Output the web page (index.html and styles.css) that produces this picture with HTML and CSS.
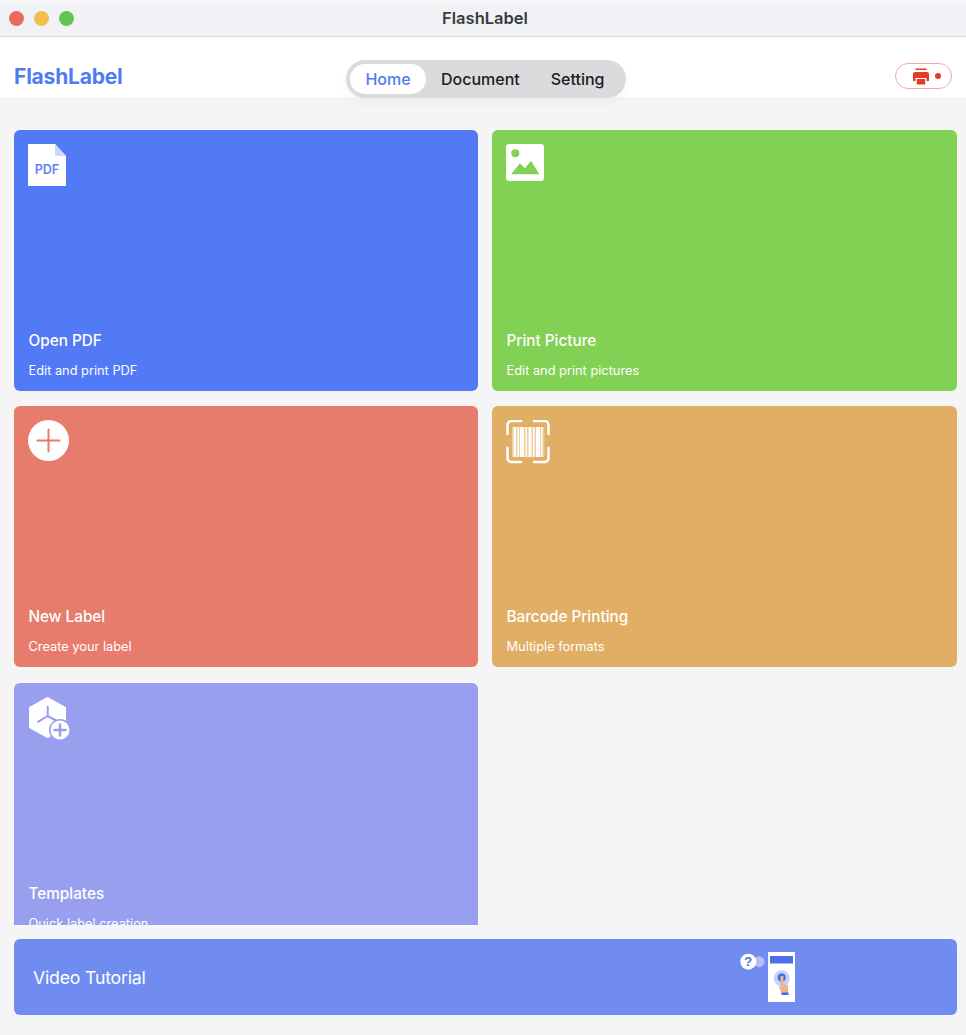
FILE: index.html
```html
<!DOCTYPE html>
<html lang="en">
<head>
    <meta charset="UTF-8">
    <meta name="viewport" content="width=device-width, initial-scale=1.0">
    <title>FlashLabel</title>
    <link rel="stylesheet" href="styles.css">
</head>
<body>
    <!-- Window title bar -->
    <div class="titlebar">
        <div class="traffic">
            <span class="light light-red"></span>
            <span class="light light-yellow"></span>
            <span class="light light-green"></span>
        </div>
        <div class="window-title">FlashLabel</div>
    </div>

    <!-- App header -->
    <div class="header">
        <div class="logo">FlashLabel</div>
        <div class="tabs">
            <div class="tab tab-active">Home</div>
            <div class="tab tab-doc">Document</div>
            <div class="tab tab-set">Setting</div>
        </div>
        <div class="printer-btn">
            <svg width="16" height="17" viewBox="0 0 16 17">
                <rect x="2.500" y="0.500" width="11" height="1.500" fill="#e5392c"/>
                <path d="M0 6a2 2 0 0 1 2-2h12a2 2 0 0 1 2 2v7h-2.500v-3h-11v3H0z" fill="#e5392c"/>
                <rect x="3.800" y="11" width="8.400" height="5.500" fill="#e5392c"/>
            </svg>
            <span class="printer-dot"></span>
        </div>
    </div>

    <div class="main">
        <div class="card-scroll">
            <div class="card-grid">
                <div class="card card-blue">
                    <svg class="card-icon" width="38" height="42" viewBox="0 0 38 42">
                        <path d="M0 0h27l11 12v30H0z" fill="#fff"/>
                        <path d="M27 0l11 12H27z" fill="#c9d8fb"/>
                        <text x="19" y="30" text-anchor="middle" class="pdf-text">PDF</text>
                    </svg>
                    <div class="card-title">Open PDF</div>
                    <div class="card-sub">Edit and print PDF</div>
                </div>
                <div class="card card-green">
                    <svg class="card-icon" width="38" height="37" viewBox="0 0 38 37">
                        <rect width="38" height="37" rx="3" fill="#fff"/>
                        <circle cx="9.300" cy="9.300" r="4" fill="#82d054"/>
                        <path d="M5 30.300l9-11 5 5 6-7.600 8.300 13.600z" fill="#82d054"/>
                    </svg>
                    <div class="card-title">Print Picture</div>
                    <div class="card-sub">Edit and print pictures</div>
                </div>
                <div class="card card-red">
                    <svg class="card-icon" width="41" height="41" viewBox="0 0 41 41">
                        <circle cx="20.500" cy="20.500" r="20.500" fill="#fff"/>
                        <path d="M20.500 9.500v22M9.500 20.500h22" stroke="#e77b6c" stroke-width="2" stroke-linecap="round"/>
                    </svg>
                    <div class="card-title">New Label</div>
                    <div class="card-sub">Create your label</div>
                </div>
                <div class="card card-orange">
                    <svg class="card-icon" width="44" height="44" viewBox="0 0 44 44">
                        <g fill="none" stroke="#fff" stroke-width="2.500" stroke-linecap="round">
                            <path d="M1.500 14V5a4 4 0 0 1 4-4h9.500"/>
                            <path d="M28 1h10.500a4 4 0 0 1 4 4v9"/>
                            <path d="M1.500 28v10a4 4 0 0 0 4 4h9.500"/>
                            <path d="M28 42h10.500a4 4 0 0 0 4-4V28"/>
                        </g>
                        <rect x="6" y="7" width="32.500" height="30" fill="#eecb99"/>
                        <g fill="#fff">
                            <rect x="7.500" y="7" width="2.500" height="30"/>
                            <rect x="11.500" y="7" width="1.500" height="30"/>
                            <rect x="14" y="7" width="4" height="30"/>
                            <rect x="19.500" y="7" width="1.500" height="30"/>
                            <rect x="22.500" y="7" width="3" height="30"/>
                            <rect x="27" y="7" width="1.500" height="30"/>
                            <rect x="30" y="7" width="4" height="30"/>
                            <rect x="35" y="7" width="1.500" height="30"/>
                        </g>
                    </svg>
                    <div class="card-title">Barcode Printing</div>
                    <div class="card-sub">Multiple formats</div>
                </div>
                <div class="card card-purple">
                    <svg class="card-icon" width="43" height="44" viewBox="0 0 43 44">
                        <path d="M19.500 1.500l17 9.500v19l-17 9.500-17-9.500V11z" fill="#fff" stroke="#fff" stroke-width="3" stroke-linejoin="round"/>
                        <path d="M19.700 9.700V19M19.700 19l-9.400 5.700M19.700 19l9.300 5" stroke="#989fef" stroke-width="2" fill="none" stroke-linecap="round"/>
                        <circle cx="32" cy="33" r="11" fill="#989fef"/>
                        <circle cx="32" cy="33" r="9.500" fill="#fff"/>
                        <path d="M32 27.500v11M26.500 33h11" stroke="#989fef" stroke-width="2.500" stroke-linecap="round"/>
                    </svg>
                    <div class="card-title">Templates</div>
                    <div class="card-sub">Quick label creation</div>
                </div>
            </div>
        </div>

        <div class="video-bar">
            <div class="video-title">Video Tutorial</div>
            <svg class="video-art" width="58" height="52" viewBox="0 0 58 52">
                <circle cx="19" cy="10.700" r="5.500" fill="#b4bdf5"/>
                <circle cx="8.300" cy="10.700" r="8" fill="#fff"/>
                <text x="8.300" y="15.200" text-anchor="middle" class="help-text">?</text>
                <rect x="28" y="1" width="27" height="50" fill="#fff"/>
                <rect x="30" y="5" width="23" height="7.500" fill="#4d6fe8"/>
                <circle cx="41.700" cy="27.300" r="8" fill="#c3d1f8"/>
                <circle cx="41.700" cy="26.500" r="4" fill="#3f6de6"/>
                <path d="M40.500 25h3v8l4.500 1v8h-6.500l-3-6.500 2 .5z" fill="#e9b395"/>
                <rect x="41.500" y="41.500" width="7" height="2.500" fill="#3f6de6"/>
            </svg>
        </div>
    </div>
</body>
</html>
```
FILE: styles.css
```css
* {
    margin: 0;
    padding: 0;
    box-sizing: border-box;
}

body {
    font-family: Inter, "Liberation Sans", Arial, sans-serif;
    background-color: #f5f5f6;
    width: 966px;
    height: 1035px;
    overflow: hidden;
    padding-top: 4px;
}

/* title bar */
.titlebar {
    position: relative;
    display: flex;
    align-items: center;
    justify-content: center;
    height: 33px;
    background-color: #f1f2f6;
    border-bottom: 1px solid #d9d9db;
}

.traffic {
    position: absolute;
    left: 9px;
    top: 7px;
    display: flex;
    gap: 10px;
}

.light {
    width: 15px;
    height: 15px;
    border-radius: 50%;
}

.light-red { background-color: #eb6a5e; }
.light-yellow { background-color: #f3bd4f; }
.light-green { background-color: #62c554; }

.window-title {
    font-size: 16.500px;
    font-weight: 600;
    color: #3a3a3c;
    margin: -4px 0 0 4px;
}

/* header */
.header {
    position: relative;
    height: 60px;
    background-color: #fff;
    display: flex;
    align-items: flex-start;
    padding: 28px 14px 0;
}

.logo {
    font-size: 21px;
    font-weight: 700;
    color: #4f7bf3;
    line-height: 24px;
    letter-spacing: -0.2px;
}

.tabs {
    position: absolute;
    left: 346px;
    top: 23px;
    width: 280px;
    height: 38px;
    display: flex;
    align-items: center;
    padding: 0 4px;
    background-color: #dbdbdd;
    border-radius: 19px;
    box-shadow: 0 6px 12px rgba(0, 0, 0, 0.03);
}

.tab {
    font-size: 16px;
    font-weight: 500;
    color: #202022;
    line-height: 20px;
}

.tab-active {
    width: 76px;
    height: 30px;
    line-height: 30px;
    text-align: center;
    color: #4f7bf3;
    background-color: #fff;
    border-radius: 15px;
}

.tab-doc { margin-left: 15px; }
.tab-set { margin-left: 31px; }

.printer-btn {
    position: absolute;
    left: 895px;
    top: 26px;
    width: 57px;
    height: 26px;
    display: flex;
    align-items: center;
    gap: 6px;
    padding-left: 17px;
    border: 1.500px solid #f4a9a1;
    border-radius: 13px;
    background-color: #fff;
}

.printer-dot {
    width: 6px;
    height: 6px;
    border-radius: 50%;
    background-color: #e5392c;
}

/* cards */
.main {
    padding: 33px 9px 0 14px;
}

.card-scroll {
    height: 795px;
    overflow: hidden;
}

.card-grid {
    display: grid;
    grid-template-columns: 464px 465px;
    grid-auto-rows: 261px;
    column-gap: 14px;
    row-gap: 15.400px;
}

.card {
    position: relative;
    border-radius: 6px;
    padding: 14px;
    color: #fff;
    display: flex;
    flex-direction: column;
}

.card-blue { background-color: #5279f6; }
.card-green { background-color: #82d054; }
.card-red { background-color: #e77b6c; }
.card-orange { background-color: #e1ae65; }
.card-purple { background-color: #989fef; }

.card-icon {
    display: block;
}

.card-title {
    position: absolute;
    left: 14.500px;
    top: 201px;
    font-size: 15.300px;
    font-weight: 500;
    line-height: 20px;
}

.card-sub {
    position: absolute;
    left: 14.500px;
    top: 233px;
    font-size: 12.800px;
    line-height: 16px;
}

.pdf-text {
    font-family: Inter, "Liberation Sans", sans-serif;
    font-size: 12.500px;
    font-weight: 600;
    fill: #5c82f5;
}

/* video tutorial */
.video-bar {
    position: relative;
    margin-top: 14px;
    height: 76px;
    width: 943px;
    border-radius: 6px;
    background-color: #718cf0;
    display: flex;
    align-items: center;
    padding-left: 19px;
}

.video-title {
    font-size: 17.700px;
    color: #fff;
    letter-spacing: -0.2px;
}

.video-art {
    position: absolute;
    left: 726px;
    top: 12px;
}

.help-text {
    font-family: "Liberation Sans", sans-serif;
    font-size: 13px;
    font-weight: 700;
    fill: #4d6fe8;
}
```
